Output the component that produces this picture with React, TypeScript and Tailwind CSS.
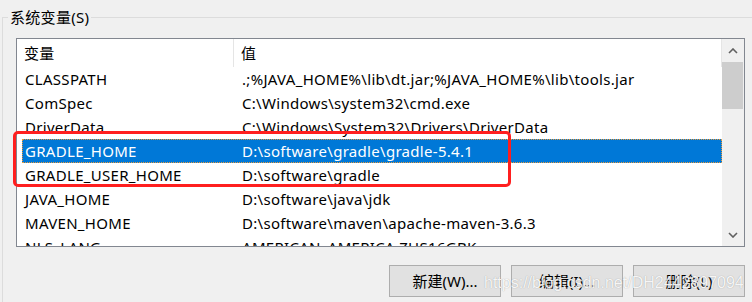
const vars = [
  { name: "CLASSPATH", value: ".;%JAVA_HOME%\\lib\\dt.jar;%JAVA_HOME%\\lib\\tools.jar" },
  { name: "ComSpec", value: "C:\\Windows\\system32\\cmd.exe" },
  { name: "DriverData", value: "C:\\Windows\\System32\\Drivers\\DriverData" },
  { name: "GRADLE_HOME", value: "D:\\software\\gradle\\gradle-5.4.1", selected: true },
  { name: "GRADLE_USER_HOME", value: "D:\\software\\gradle" },
  { name: "JAVA_HOME", value: "D:\\software\\java\\jdk" },
  { name: "MAVEN_HOME", value: "D:\\software\\maven\\apache-maven-3.6.3" },
  { name: "NLS_LANG", value: "AMERICAN_AMERICA.ZHS16GBK" },
];

function Chevron({ down }: { down?: boolean }) {
  return (
    <svg width="10" height="6" viewBox="0 0 10 6">
      <path d={down ? "M1 1 L5 5 L9 1" : "M1 5 L5 1 L9 5"} fill="none" stroke="#606060" strokeWidth="1.6" />
    </svg>
  );
}

export default function App() {
  return (
    <div className="relative w-[752px] h-[302px] overflow-hidden bg-[#f0f0f0] pl-[2px] pt-[17px] text-[15px] tracking-[0.3px] text-black font-['Noto_Sans','Noto_Sans_CJK_SC',sans-serif]">
      {/* group box */}
      <div className="relative h-[300px] border-l border-t border-[#dcdcdc] pl-[13px] pt-[20px]">
        <span className="absolute left-[5px] top-[-11px] bg-[#f0f0f0] px-[2px] leading-[20px]">系统变量(S)</span>

        {/* list */}
        <div className="flex h-[209px] w-[729px] border border-[#828790] bg-white">
          <div className="w-[705px] overflow-hidden">
            <div className="flex h-[28px] items-center">
              <div className="h-full w-[217px] border-r border-[#e5e5e5] pl-[7px] leading-[28px]">变量</div>
              <div className="h-full flex-1 border-r border-[#e5e5e5] pl-[7px] leading-[28px]">值</div>
            </div>
            {vars.map((v) => (
              <div
                key={v.name}
                className={
                  v.selected
                    ? "ml-[5px] flex h-[24px] items-center bg-[#0078d7] text-white leading-[24px] outline-1 outline-dotted -outline-offset-1 outline-[#e89a3c]"
                    : "ml-[5px] flex h-[24px] items-center leading-[24px]"
                }
              >
                <div className="w-[220px] pl-[3px] whitespace-nowrap">{v.name}</div>
                <div className="whitespace-nowrap">{v.value}</div>
              </div>
            ))}
          </div>
          {/* scrollbar */}
          <div className="flex w-[22px] flex-col bg-[#f0f0f0]">
            <div className="flex h-[23px] items-center justify-center"><Chevron /></div>
            <div className="h-[47px] mr-[1px] bg-[#cdcdcd]" />
            <div className="flex-1" />
            <div className="flex h-[22px] items-center justify-center"><Chevron down /></div>
          </div>
        </div>

        {/* buttons */}
        <div className="mt-[18px] flex w-[729px] justify-end gap-[10px]">
          {["新建(W)...", "编辑(I)...", "删除(L)"].map((t) => (
            <div key={t} className="flex h-[32px] w-[112px] items-center justify-center border border-[#adadad] bg-[#e1e1e1] tracking-normal">
              {t}
            </div>
          ))}
        </div>
      </div>

      {/* red highlight */}
      <div className="absolute left-[13px] top-[131px] h-[56px] w-[498px] rounded-[5px] border-[3px] border-[#ff1f1f]" />

      {/* watermark */}
      <div className="absolute left-[484px] top-[271px] text-[16px] tracking-normal text-white/90 font-['Liberation_Sans',sans-serif] [text-shadow:0_0_1px_rgba(0,0,0,0.35)]">
        https://blog.csdn.net/DH2442897094
      </div>
    </div>
  );
}
